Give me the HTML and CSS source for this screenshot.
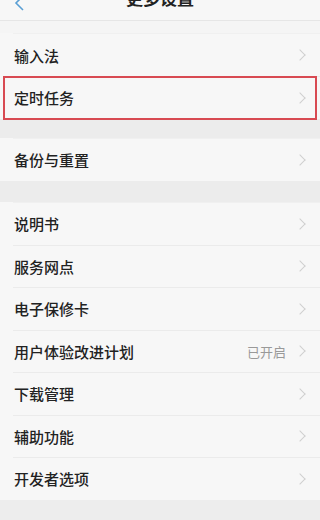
FILE: index.html
```html
<!DOCTYPE html>
<html lang="zh">
<head>
<meta charset="utf-8">
<link rel="stylesheet" href="styles.css">
</head>
<body>
<div class="page">
  <header class="header">
    <svg class="back" width="12" height="14" viewBox="0 0 12 14"><path d="M9 -4 L2 3 L9 10" fill="none" stroke="#5a9fd4" stroke-width="1.6"/></svg>
    <div class="title">更多设置</div>
  </header>
  <div class="gap g0"></div>
  <div class="group">
    <div class="row first"><span class="label">输入法</span><span class="chev"></span></div>
    <div class="row hl"><span class="label">定时任务</span><span class="chev"></span></div>
  </div>
  <div class="gap g1"></div>
  <div class="group">
    <div class="row first"><span class="label">备份与重置</span><span class="chev"></span></div>
  </div>
  <div class="gap g2"></div>
  <div class="group">
    <div class="row first"><span class="label">说明书</span><span class="chev"></span></div>
    <div class="row"><span class="label">服务网点</span><span class="chev"></span></div>
    <div class="row"><span class="label">电子保修卡</span><span class="chev"></span></div>
    <div class="row"><span class="label">用户体验改进计划</span><span class="value">已开启</span><span class="chev"></span></div>
    <div class="row"><span class="label">下载管理</span><span class="chev"></span></div>
    <div class="row"><span class="label">辅助功能</span><span class="chev"></span></div>
    <div class="row"><span class="label">开发者选项</span><span class="chev"></span></div>
  </div>
</div>
</body>
</html>
```
FILE: styles.css
```css
* { box-sizing: border-box; }
html, body { margin: 0; padding: 0; }
body {
  background: #ededed;
  font-family: "Noto Sans CJK SC", "Noto Sans", sans-serif;
  width: 320px;
  height: 520px;
  overflow: hidden;
}
.page { display: flex; flex-direction: column; }
.header {
  height: 21px;
  background: #f7f7f7;
  border-bottom: 1px solid #e6e6e6;
  position: relative;
  display: flex;
  justify-content: center;
  overflow: hidden;
}
.back { position: absolute; left: 14px; top: 0; }
.title {
  margin-top: -14px;
  font-size: 17px;
  font-weight: bold;
  color: #222;
  line-height: 24px;
}
.gap { background: #f1f1f1; }
.g0 { height: 12px; background: #f5f5f5; }
.g1 { height: 19px; background: #ececec; }
.g2 { height: 21px; background: #ececec; }
.group { background: #f7f7f7; display: flex; flex-direction: column; }
.row {
  height: 42.5px;
  display: flex;
  align-items: center;
  padding: 0 14px;
  position: relative;
  border-top: 1px solid #ebebeb;
  margin-left: 13px;
  padding-left: 1px;
}
.row.first { border-top: 1px solid #f0f0f0; }
.group .row:first-child { height: 43px; }
.label { font-size: 15px; color: #222; flex: 1; font-weight: 500; }
.value { font-size: 13px; color: #999; margin-right: 10px; }
.chev {
  width: 8px; height: 8px;
  border-top: 1.4px solid #cfcfcf;
  border-right: 1.4px solid #cfcfcf;
  transform: rotate(45deg);
  margin-right: 2px;
}
.row.hl::after {
  content: "";
  position: absolute;
  left: -10px; right: 3px; top: -1px; bottom: -1px;
  border: 2px solid #d84a52;
}
```
